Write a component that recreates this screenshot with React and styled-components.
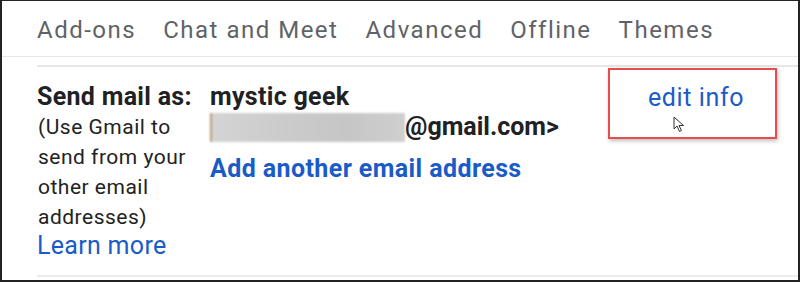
import React from 'react';
import styled, { createGlobalStyle } from 'styled-components';

const GlobalStyle = createGlobalStyle`
  html, body { margin: 0; padding: 0; background: #fff; }
  body { font-family: Roboto, "Noto Sans", "Liberation Sans", sans-serif; }
`

const Frame = styled.div`
  box-sizing: border-box;
  width: 800px;
  height: 282px;
  border-style: solid;
  border-color: #232323;
  border-width: 1px 2px 2px 2px;
  background: #fff;
  overflow: hidden;
`

const Tabs = styled.nav`
  display: flex;
  gap: 27px;
  height: 56px;
  padding: 11px 0 0 35px;
  box-sizing: border-box;
  border-bottom: 1px solid #e8e8e8;
`

const Tab = styled.span`
  font-size: 24px;
  line-height: 36px;
  color: #5f6368;
  letter-spacing: 1.5px;
`

const Section = styled.section`
  margin: 8px 0 0 35px;
  border-top: 2px solid #e6e6e6;
  border-bottom: 2px solid #ececec;
  height: 212px;
  box-sizing: border-box;
  position: relative;
`

const Row = styled.div`
  display: grid;
  grid-template-columns: 173px 400px 1fr;
  padding-top: 15px;
`

const Label = styled.div`
  font-size: 21px;
  line-height: 30px;
  color: #222;
  letter-spacing: 0.5px;
  padding-left: 1px;
`

const Title = styled.div`
  font-weight: 700;
  font-size: 25px;
  line-height: 30px;
  color: #202124;
  letter-spacing: 0.3px;
  white-space: nowrap;
`

const Link = styled.a`
  display: block;
  color: #1a5bc8;
  font-size: 25px;
  font-weight: ${p => (p.bold ? 700 : 400)};
  line-height: ${p => p.lh || 30}px;
  letter-spacing: ${p => p.ls || 0.3}px;
  text-decoration: none;
  white-space: nowrap;
  margin-top: ${p => p.top || 0}px;
  padding-left: ${p => p.left || 0}px;
`

const Address = styled.div`
  display: flex;
  align-items: center;
  font-size: 25px;
  font-weight: 700;
  color: #202124;
  line-height: 30px;
  white-space: nowrap;
`

const Blur = styled.span`
  display: inline-block;
  width: 195px;
  height: 29px;
  background: linear-gradient(90deg, #d4d4d4, #cbcbcb 40%, #c6c6c6 70%, #cfcfcf);
  filter: blur(0.8px);
  border-left: 2px solid #b89a7a;
  box-sizing: border-box;
`

const Annotation = styled.div`
  position: absolute;
  left: 571px;
  top: 1px;
  width: 169px;
  height: 71px;
  box-sizing: border-box;
  border: 2px solid #e84c4c;
  box-shadow: 1px 2px 4px rgba(0, 0, 0, 0.25);
  pointer-events: none;
`

const Cursor = styled.svg`
  position: absolute;
  left: 636px;
  top: 49px;
`

export default function App() {
  return (
    <>
      <GlobalStyle />
      <Frame>
        <Tabs>
          <Tab>Add-ons</Tab>
          <Tab>Chat and Meet</Tab>
          <Tab>Advanced</Tab>
          <Tab>Offline</Tab>
          <Tab>Themes</Tab>
        </Tabs>
        <Section>
          <Row>
            <div>
              <Title>Send mail as:</Title>
              <Label>
                (Use Gmail to<br />
                send from your<br />
                other email<br />
                addresses)
              </Label>
              <Link href="#" lh={28}>Learn more</Link>
            </div>
            <div>
              <Title>mystic geek</Title>
              <Address>
                <Blur />
                <span>@gmail.com&gt;</span>
              </Address>
              <Link href="#" bold ls={0.4} top={12}>Add another email address</Link>
            </div>
            <div>
              <Link href="#" ls={0.6} left={38} top={1}>edit info</Link>
            </div>
          </Row>
          <Annotation />
          <Cursor width="13" height="17" viewBox="0 0 13 17">
            <path d="M1 1 L1 13 L4 10 L6.5 15.5 L8.5 14.5 L6 9.5 L10.5 9.5 Z" fill="#fff" stroke="#333" strokeWidth="1" strokeLinejoin="round" />
          </Cursor>
        </Section>
      </Frame>
    </>
  );
}
